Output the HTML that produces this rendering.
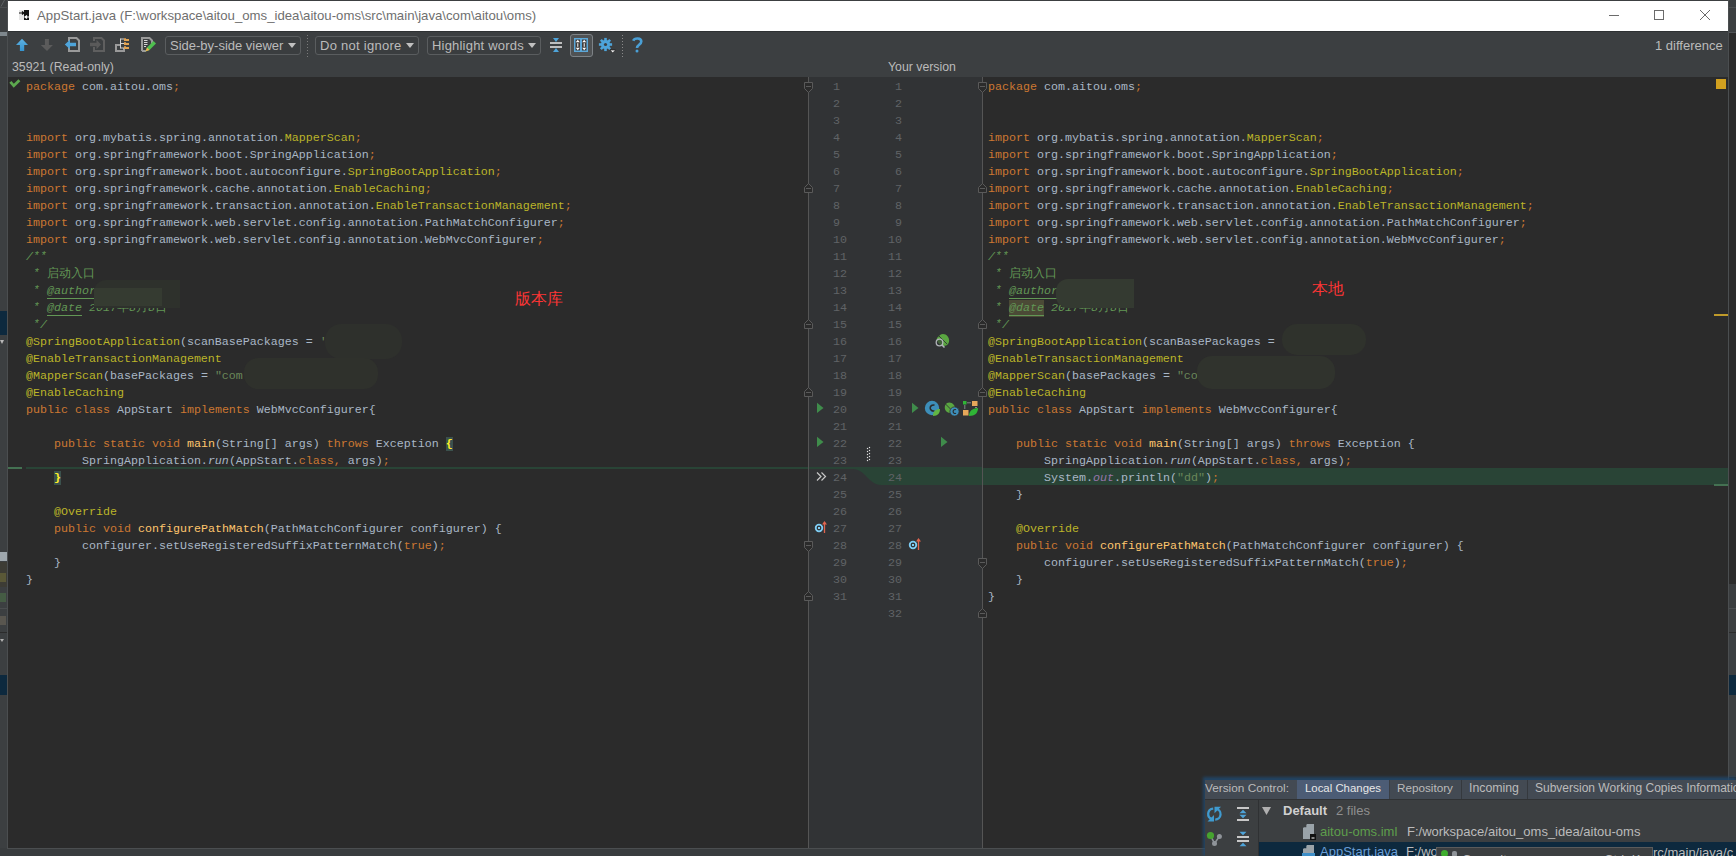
<!DOCTYPE html>
<html><head><meta charset="utf-8"><title>AppStart.java</title>
<style>
*{margin:0;padding:0;box-sizing:border-box}
html,body{width:1736px;height:856px;overflow:hidden;background:#3c3f41;font-family:"Liberation Sans",sans-serif;position:relative}
.x{position:absolute}
#title{left:8px;top:1px;width:1720px;height:30px;background:#fff}
.tt{left:37px;top:8px;font-size:13.2px;color:#6f6f6f;white-space:nowrap}
#tbline{left:8px;top:31px;width:1720px;height:1px;background:#2e3133}
.dd{top:36px;height:19px;border:1px solid #5a5d5f;border-radius:3px;background:#3a3d3f;color:#bbbbbb;font-size:13px;line-height:18px;padding-left:4px;white-space:nowrap}
.dd i{position:absolute;right:4px;top:6px;width:0;height:0;border-left:4.5px solid transparent;border-right:4.5px solid transparent;border-top:5px solid #c0c0c0}
.lbl{color:#bbbbbb;font-size:12.3px;white-space:nowrap}
#ed{left:8px;top:77px;width:1720px;height:771px;background:#2b2b2b}
#gut{left:809px;top:77px;width:173px;height:771px;background:#313335}
.code{position:absolute;top:79px;font-family:"Liberation Mono",monospace;font-size:11.667px;line-height:17px;color:#a9b7c6;white-space:pre}
.cl{left:26px}
.cr{left:988px}
.ln{height:17px}
.k{color:#cc7832}
.a{color:#bbb529}
.s{color:#6a8759}
.c{color:#629755;font-style:italic}
.cn{color:#629755}
.t{color:#629755;font-style:italic;text-decoration:underline;text-underline-offset:4px;text-decoration-thickness:1px}
.hl{background:#4b4a36;display:inline-block;height:17px;vertical-align:top}
.f{color:#ffc66d}
.i{font-style:italic}
.p{color:#9876aa;font-style:italic}
.br{color:#ffef28;background:#3b514d;font-weight:bold}
.nums{top:79px;font-family:"Liberation Mono",monospace;font-size:11.667px;line-height:17px;color:#606366;text-align:right;width:60px}
.vl{top:77px;width:1px;height:771px;background:#555555}
.red{font-size:16px;color:#fc3535;line-height:20px;white-space:nowrap}
.vct{font-size:13px;color:#bbbbbb;white-space:nowrap;line-height:17px}
.ast{display:inline-block;width:7px;font-size:10.5px;vertical-align:top;line-height:15px;text-align:center;font-weight:normal}

</style></head><body>
<!-- left background strip -->
<div class="x" style="left:0;top:0;width:8px;height:856px;background:#3c3f41"></div>
<div class="x" style="left:7px;top:0;width:1px;height:856px;background:#4b4e50"></div>
<div class="x" style="left:0;top:7px;width:7px;height:1px;background:#4b4e50"></div>
<svg class="x" style="left:0;top:0" width="8" height="8" viewBox="0 0 8 8"><path d="M1 6.5L4.5 0" stroke="#5d6163" stroke-width="1"/></svg>
<div class="x" style="left:0;top:32px;width:7px;height:4px;background:#7e878d"></div>
<div class="x" style="left:0;top:311px;width:7px;height:24px;background:#0d293e"></div>
<div class="x" style="left:0;top:552px;width:7px;height:9px;background:#9ea7ad"></div>
<div class="x" style="left:0;top:562px;width:7px;height:25px;background:#3d3c35"></div>
<div class="x" style="left:0;top:675px;width:7px;height:20px;background:#0d293e"></div>
<div class="x" style="left:0;top:340px;width:4px;height:4px;background:#b8b8b8;clip-path:polygon(0 0,100% 0,50% 100%)"></div>
<div class="x" style="left:0;top:573px;width:6px;height:9px;background:#9f9a3a;opacity:.3"></div>
<div class="x" style="left:0;top:593px;width:6px;height:9px;background:#5d9e4c;opacity:.3"></div><div class="x" style="left:0;top:608px;width:7px;height:1px;background:#4a4d4f"></div>
<div class="x" style="left:0;top:616px;width:6px;height:9px;background:#a08a70;opacity:.3"></div>
<div class="x" style="left:0;top:632px;width:7px;height:1px;background:#2b2b2b"></div>
<div class="x" style="left:0;top:639px;width:4px;height:3px;background:#b0b0b0;clip-path:polygon(0 0,100% 0,50% 100%)"></div>
<div class="x" style="left:0;top:848px;width:1205px;height:8px;background:#393c3e"></div>
<div class="x" style="left:7px;top:848px;width:1198px;height:1px;background:#4b4e50"></div>
<!-- right strip -->
<div class="x" style="left:1728px;top:0;width:8px;height:856px;background:#2b2b2b"></div>
<div class="x" style="left:1728px;top:0;width:8px;height:32px;background:#3c3f41"></div>
<div class="x" style="left:1728px;top:7px;width:8px;height:1px;background:#4b4e50"></div>
<div class="x" style="left:1728px;top:32px;width:8px;height:1px;background:#505356"></div>
<div class="x" style="left:1728px;top:584px;width:8px;height:24px;background:#3a3d3f"></div>
<div class="x" style="left:1728px;top:608px;width:8px;height:1px;background:#4b4e50"></div>
<div class="x" style="left:1728px;top:609px;width:8px;height:23px;background:#3c3f41"></div>
<div class="x" style="left:1728px;top:633px;width:8px;height:42px;background:#3b3f42"></div>
<div class="x" style="left:1728px;top:675px;width:8px;height:20px;background:#0d293e"></div>
<div class="x" style="left:1728px;top:695px;width:8px;height:82px;background:#3c3f41"></div>
<div class="x" style="left:1728px;top:0;width:1px;height:856px;background:#4b4e50"></div>
<!-- title -->
<div class="x" id="title"></div>
<svg class="x" style="left:19px;top:10px" width="11" height="11" viewBox="0 0 11 11"><rect x="0" y="0" width="5" height="10" fill="#e6e6e6"/><rect x="5" y="0" width="5" height="10" fill="#111"/><path d="M0 3h5M3 1.5l2 1.5l-2 1.5" stroke="#111" stroke-width="1.2" fill="none"/><path d="M10 7h-3M8 5.5l-2 1.5l2 1.5" stroke="#fff" stroke-width="1.2" fill="none"/></svg>
<div class="x tt">AppStart.java (F:\workspace\aitou_oms_idea\aitou-oms\src\main\java\com\aitou\oms)</div>
<div class="x" style="left:1609px;top:15px;width:10px;height:1px;background:#6b6b6b"></div>
<div class="x" style="left:1654px;top:10px;width:10px;height:10px;border:1px solid #6b6b6b"></div>
<svg class="x" style="left:1699px;top:9px" width="12" height="12" viewBox="0 0 12 12"><path d="M1 1L11 11M11 1L1 11" stroke="#6b6b6b" stroke-width="1"/></svg>
<div class="x" id="tbline"></div>
<!-- toolbar icons -->
<svg class="x" style="left:14px;top:36px" width="150" height="18" viewBox="14 36 150 18">
 <defs><linearGradient id="bl" x1="0" y1="0" x2="0" y2="1"><stop offset="0" stop-color="#5eb1e2"/><stop offset="1" stop-color="#3594d0"/></linearGradient></defs>
 <path d="M22 38.8L28 45H24.2V51H19.9V45H16Z" fill="url(#bl)"/>
 <path d="M44.9 39H48.9V45H52.9L47 51L40.8 45H44.9Z" fill="#5b5b5b"/>
 <path d="M69 41V38H76.5L79 40.5V51H69V47" fill="none" stroke="#9a9a9a" stroke-width="2"/>
 <path d="M64.8 44.5L70 39.8V42.8H76V46.2H70V49.3Z" fill="#4ea4da"/>
 <path d="M94 41V38H101.5L104 40.5V51H94V47" fill="none" stroke="#5f5f5f" stroke-width="2"/>
 <path d="M90 42.8H96.5V39.8L101 44.5L96.5 49.3V46.2H90Z" fill="#5a5a5a"/>
 <path d="M121 45H116V51H124V48" fill="none" stroke="#9a9a9a" stroke-width="2"/>
 <path d="M120.5 39H124M120.5 38.5V48.5M120.5 43.5H124M120.5 48H124" fill="none" stroke="#d2d2d2" stroke-width="1"/>
 <path d="M124 38.3H126V38.9H129V41H124ZM124 42.3H126V42.9H129V45H124ZM124 46.3H126V46.9H129V49H124Z" fill="#e2a352"/>
 <path d="M142 51V38H149.5L152 40.5V44M146 51H142" fill="none" stroke="#9a9a9a" stroke-width="2"/>
 <path d="M144 40.5H147.5M144 42.5H147.5M144 44.5H147.5M144 46.5H146" stroke="#d6d6d6" stroke-width="1"/>
 <path d="M145.5 51.5L147 47.5L153.5 41L156 43.5L149.5 50Z" fill="#4fbf4f"/>
 <path d="M145.5 51.5L147 47.5L149.5 50Z" fill="#f0b050"/>
</svg>
<div class="x dd" style="left:165px;width:136px">Side-by-side viewer<i></i></div>
<div class="x" style="left:307px;top:35px;width:1px;height:22px;background:repeating-linear-gradient(#7a7a7a 0 1px,transparent 1px 3px)"></div>
<div class="x dd" style="left:315px;width:104px;letter-spacing:0.27px">Do not ignore<i></i></div>
<div class="x dd" style="left:427px;width:114px;letter-spacing:0.2px">Highlight words<i></i></div>
<svg class="x" style="left:548px;top:36px" width="100" height="20" viewBox="548 36 100 20">
 <path d="M553 38H559L556 42Z" fill="#4ea4da"/>
 <rect x="550" y="42" width="12" height="2" fill="#bdbdbd"/>
 <rect x="550" y="46" width="12" height="2" fill="#bdbdbd"/>
 <path d="M553 52H559L556 48Z" fill="#4ea4da"/>
 <rect x="574" y="38" width="14" height="14" fill="#4a9fd5"/>
 <rect x="575.5" y="39.5" width="4.5" height="11" fill="#2a2422"/>
 <rect x="582" y="39.5" width="4.5" height="11" fill="#2a2422"/>
 <path d="M575.8 42.3L577.8 39.8L579.8 42.3ZM575.8 47.7L577.8 50.2L579.8 47.7ZM582.2 42.3L584.2 39.8L586.2 42.3ZM582.2 47.7L584.2 50.2L586.2 47.7Z" fill="#fff"/>
 <rect x="577.3" y="43.2" width="1" height="3.6" fill="#fff"/>
 <rect x="583.7" y="43.2" width="1" height="3.6" fill="#fff"/>
 <g transform="translate(605.5 44.5)" fill="#4ea4da"><circle r="4.6"/><rect x="-1.3" y="-6.6" width="2.6" height="13.2"/><rect x="-6.6" y="-1.3" width="13.2" height="2.6"/><rect x="-1.3" y="-6.6" width="2.6" height="13.2" transform="rotate(45)"/><rect x="-1.3" y="-6.6" width="2.6" height="13.2" transform="rotate(-45)"/><circle r="1.6" fill="#3c3f41"/></g>
 <path d="M610 50H615.5L612.7 53Z" fill="#f0f0f0" stroke="#111" stroke-width="0.6"/>
 <path d="M633.2 40.8C634.5 37.8 641.3 37.6 641.3 41.6C641.3 44.6 637 45 637 47.9" fill="none" stroke="#4a9fd5" stroke-width="2.6"/>
 <circle cx="637" cy="50.9" r="1.5" fill="#4a9fd5"/>
</svg>
<div class="x" style="left:570px;top:34px;width:23px;height:23px;border:1px solid #7d8286;border-radius:3px;background:rgba(255,255,255,0.1)"></div>
<div class="x" style="left:622px;top:35px;width:1px;height:22px;background:repeating-linear-gradient(#8a8a8a 0 1px,transparent 1px 3px)"></div>
<div class="x lbl" style="left:12px;top:60px">35921 (Read-only)</div>
<div class="x lbl" style="left:888px;top:60px">Your version</div>
<div class="x lbl" style="left:1655px;top:38px;font-size:13px">1 difference</div>

<div class="x" id="ed"></div>
<div class="x" id="gut"></div>
<!-- diff highlight -->
<div class="x" style="left:8px;top:467px;width:14px;height:2px;background:#447152"></div>
<div class="x" style="left:26px;top:467px;width:783px;height:2px;background:#294436"></div>
<svg class="x" style="left:809px;top:467px" width="173" height="18" viewBox="0 0 173 18"><path d="M0 0H173V18H72C60 18 56 2 44 2H0Z" fill="#294436"/></svg>
<div class="x" style="left:983px;top:468px;width:745px;height:17px;background:#294436"></div>
<div class="x" style="left:1714px;top:484px;width:14px;height:2px;background:#447152"></div>
<div class="x vl" style="left:808px"></div>
<div class="x vl" style="left:982px"></div>
<svg class="x" style="left:804px;top:82px" width="9" height="11" viewBox="0 0 9 11"><path d="M0.5 0.5H8.5V6.5L4.5 10.5L0.5 6.5Z" fill="#2b2b2b" stroke="#5a5a5a"/><path d="M2 4.5H7" stroke="#5a5a5a"/></svg><svg class="x" style="left:804px;top:183px" width="9" height="11" viewBox="0 0 9 11"><path d="M4.5 0.5L8.5 4.5V9.5H0.5V4.5Z" fill="#2b2b2b" stroke="#5a5a5a"/><path d="M2 5.5H7" stroke="#5a5a5a"/></svg><svg class="x" style="left:804px;top:319px" width="9" height="11" viewBox="0 0 9 11"><path d="M4.5 0.5L8.5 4.5V9.5H0.5V4.5Z" fill="#2b2b2b" stroke="#5a5a5a"/><path d="M2 5.5H7" stroke="#5a5a5a"/></svg><svg class="x" style="left:804px;top:387px" width="9" height="11" viewBox="0 0 9 11"><path d="M4.5 0.5L8.5 4.5V9.5H0.5V4.5Z" fill="#2b2b2b" stroke="#5a5a5a"/><path d="M2 5.5H7" stroke="#5a5a5a"/></svg><svg class="x" style="left:804px;top:541px" width="9" height="11" viewBox="0 0 9 11"><path d="M0.5 0.5H8.5V6.5L4.5 10.5L0.5 6.5Z" fill="#2b2b2b" stroke="#5a5a5a"/><path d="M2 4.5H7" stroke="#5a5a5a"/></svg><svg class="x" style="left:804px;top:591px" width="9" height="11" viewBox="0 0 9 11"><path d="M4.5 0.5L8.5 4.5V9.5H0.5V4.5Z" fill="#2b2b2b" stroke="#5a5a5a"/><path d="M2 5.5H7" stroke="#5a5a5a"/></svg><svg class="x" style="left:978px;top:82px" width="9" height="11" viewBox="0 0 9 11"><path d="M0.5 0.5H8.5V6.5L4.5 10.5L0.5 6.5Z" fill="#2b2b2b" stroke="#5a5a5a"/><path d="M2 4.5H7" stroke="#5a5a5a"/></svg><svg class="x" style="left:978px;top:183px" width="9" height="11" viewBox="0 0 9 11"><path d="M4.5 0.5L8.5 4.5V9.5H0.5V4.5Z" fill="#2b2b2b" stroke="#5a5a5a"/><path d="M2 5.5H7" stroke="#5a5a5a"/></svg><svg class="x" style="left:978px;top:319px" width="9" height="11" viewBox="0 0 9 11"><path d="M4.5 0.5L8.5 4.5V9.5H0.5V4.5Z" fill="#2b2b2b" stroke="#5a5a5a"/><path d="M2 5.5H7" stroke="#5a5a5a"/></svg><svg class="x" style="left:978px;top:387px" width="9" height="11" viewBox="0 0 9 11"><path d="M4.5 0.5L8.5 4.5V9.5H0.5V4.5Z" fill="#2b2b2b" stroke="#5a5a5a"/><path d="M2 5.5H7" stroke="#5a5a5a"/></svg><svg class="x" style="left:978px;top:558px" width="9" height="11" viewBox="0 0 9 11"><path d="M0.5 0.5H8.5V6.5L4.5 10.5L0.5 6.5Z" fill="#2b2b2b" stroke="#5a5a5a"/><path d="M2 4.5H7" stroke="#5a5a5a"/></svg><svg class="x" style="left:978px;top:608px" width="9" height="11" viewBox="0 0 9 11"><path d="M4.5 0.5L8.5 4.5V9.5H0.5V4.5Z" fill="#2b2b2b" stroke="#5a5a5a"/><path d="M2 5.5H7" stroke="#5a5a5a"/></svg>
<svg class="x" style="left:9px;top:79px" width="12" height="9" viewBox="9 79 12 9"><path d="M10.4 81.9L13.8 85.8L19.4 80.3" fill="none" stroke="#5ca84e" stroke-width="2.8"/></svg>
<div class="code cl"><div class="ln"><span class="k">package</span> com.aitou.oms<span class="k">;</span></div><div class="ln">&nbsp;</div><div class="ln">&nbsp;</div><div class="ln"><span class="k">import</span> org.mybatis.spring.annotation.<span class="a">MapperScan</span><span class="k">;</span></div><div class="ln"><span class="k">import</span> org.springframework.boot.SpringApplication<span class="k">;</span></div><div class="ln"><span class="k">import</span> org.springframework.boot.autoconfigure.<span class="a">SpringBootApplication</span><span class="k">;</span></div><div class="ln"><span class="k">import</span> org.springframework.cache.annotation.<span class="a">EnableCaching</span><span class="k">;</span></div><div class="ln"><span class="k">import</span> org.springframework.transaction.annotation.<span class="a">EnableTransactionManagement</span><span class="k">;</span></div><div class="ln"><span class="k">import</span> org.springframework.web.servlet.config.annotation.PathMatchConfigurer<span class="k">;</span></div><div class="ln"><span class="k">import</span> org.springframework.web.servlet.config.annotation.WebMvcConfigurer<span class="k">;</span></div><div class="ln"><span class="c">/<span class="ast">*</span><span class="ast">*</span></span></div><div class="ln"><span class="c"> <span class="ast">*</span> </span><span class="cn">启动入口</span></div><div class="ln"><span class="c"> <span class="ast">*</span> </span><span class="t">@author</span></div><div class="ln"><span class="c"> <span class="ast">*</span> </span><span class="t">@date</span><span class="c"> 2017</span><span class="cn">年</span><span class="c">8</span><span class="cn">月</span><span class="c">8</span><span class="cn">日</span></div><div class="ln"><span class="c"> <span class="ast">*</span>/</span></div><div class="ln"><span class="a">@SpringBootApplication</span>(scanBasePackages = <span class="s">'</span></div><div class="ln"><span class="a">@EnableTransactionManagement</span></div><div class="ln"><span class="a">@MapperScan</span>(basePackages = <span class="s">"com</span></div><div class="ln"><span class="a">@EnableCaching</span></div><div class="ln"><span class="k">public class</span> AppStart <span class="k">implements</span> WebMvcConfigurer{</div><div class="ln">&nbsp;</div><div class="ln">    <span class="k">public static void</span> <span class="f">main</span>(String[] args) <span class="k">throws</span> Exception <span class="br">{</span></div><div class="ln">        SpringApplication.<span class="i">run</span>(AppStart.<span class="k">class, </span>args)<span class="k">;</span></div><div class="ln">    <span class="br">}</span></div><div class="ln">&nbsp;</div><div class="ln">    <span class="a">@Override</span></div><div class="ln">    <span class="k">public void</span> <span class="f">configurePathMatch</span>(PathMatchConfigurer configurer) {</div><div class="ln">        configurer.setUseRegisteredSuffixPatternMatch(<span class="k">true</span>)<span class="k">;</span></div><div class="ln">    }</div><div class="ln">}</div></div>
<div class="code cr"><div class="ln"><span class="k">package</span> com.aitou.oms<span class="k">;</span></div><div class="ln">&nbsp;</div><div class="ln">&nbsp;</div><div class="ln"><span class="k">import</span> org.mybatis.spring.annotation.<span class="a">MapperScan</span><span class="k">;</span></div><div class="ln"><span class="k">import</span> org.springframework.boot.SpringApplication<span class="k">;</span></div><div class="ln"><span class="k">import</span> org.springframework.boot.autoconfigure.<span class="a">SpringBootApplication</span><span class="k">;</span></div><div class="ln"><span class="k">import</span> org.springframework.cache.annotation.<span class="a">EnableCaching</span><span class="k">;</span></div><div class="ln"><span class="k">import</span> org.springframework.transaction.annotation.<span class="a">EnableTransactionManagement</span><span class="k">;</span></div><div class="ln"><span class="k">import</span> org.springframework.web.servlet.config.annotation.PathMatchConfigurer<span class="k">;</span></div><div class="ln"><span class="k">import</span> org.springframework.web.servlet.config.annotation.WebMvcConfigurer<span class="k">;</span></div><div class="ln"><span class="c">/<span class="ast">*</span><span class="ast">*</span></span></div><div class="ln"><span class="c"> <span class="ast">*</span> </span><span class="cn">启动入口</span></div><div class="ln"><span class="c"> <span class="ast">*</span> </span><span class="t">@author</span></div><div class="ln"><span class="c"> <span class="ast">*</span> </span><span class="t hl">@date</span><span class="c"> 2017</span><span class="cn">年</span><span class="c">8</span><span class="cn">月</span><span class="c">8</span><span class="cn">日</span></div><div class="ln"><span class="c"> <span class="ast">*</span>/</span></div><div class="ln"><span class="a">@SpringBootApplication</span>(scanBasePackages = </div><div class="ln"><span class="a">@EnableTransactionManagement</span></div><div class="ln"><span class="a">@MapperScan</span>(basePackages = <span class="s">"co</span></div><div class="ln"><span class="a">@EnableCaching</span></div><div class="ln"><span class="k">public class</span> AppStart <span class="k">implements</span> WebMvcConfigurer{</div><div class="ln">&nbsp;</div><div class="ln">    <span class="k">public static void</span> <span class="f">main</span>(String[] args) <span class="k">throws</span> Exception {</div><div class="ln">        SpringApplication.<span class="i">run</span>(AppStart.<span class="k">class, </span>args)<span class="k">;</span></div><div class="ln">        System.<span class="p">out</span>.println(<span class="s">"dd"</span>)<span class="k">;</span></div><div class="ln">    }</div><div class="ln">&nbsp;</div><div class="ln">    <span class="a">@Override</span></div><div class="ln">    <span class="k">public void</span> <span class="f">configurePathMatch</span>(PathMatchConfigurer configurer) {</div><div class="ln">        configurer.setUseRegisteredSuffixPatternMatch(<span class="k">true</span>)<span class="k">;</span></div><div class="ln">    }</div><div class="ln">}</div></div>
<div class="x nums" style="left:833px;text-align:left"><div>1</div><div>2</div><div>3</div><div>4</div><div>5</div><div>6</div><div>7</div><div>8</div><div>9</div><div>10</div><div>11</div><div>12</div><div>13</div><div>14</div><div>15</div><div>16</div><div>17</div><div>18</div><div>19</div><div>20</div><div>21</div><div>22</div><div>23</div><div>24</div><div>25</div><div>26</div><div>27</div><div>28</div><div>29</div><div>30</div><div>31</div></div>
<div class="x nums" style="left:842px"><div>1</div><div>2</div><div>3</div><div>4</div><div>5</div><div>6</div><div>7</div><div>8</div><div>9</div><div>10</div><div>11</div><div>12</div><div>13</div><div>14</div><div>15</div><div>16</div><div>17</div><div>18</div><div>19</div><div>20</div><div>21</div><div>22</div><div>23</div><div>24</div><div>25</div><div>26</div><div>27</div><div>28</div><div>29</div><div>30</div><div>31</div><div>32</div></div>
<!-- gutter icons -->
<svg class="x" style="left:809px;top:330px" width="173" height="220" viewBox="809 330 173 220">
 <!-- line16 bean + magnifier -->
 <path d="M940 335C944 332 950 336 949 342C948 345 946 346 943 346C939 345 936 341 937 338Z" fill="#5aa641"/>
 <path d="M939 336L947 344" stroke="#313335" stroke-width="0.9"/>
 <circle cx="939.5" cy="342.5" r="3.3" fill="rgba(49,51,53,0.6)" stroke="#b0b4b8" stroke-width="1.3"/>
 <path d="M942 345L944.5 347.5" stroke="#b0b4b8" stroke-width="1.6"/>
 <!-- line 20 run triangles -->
 <path d="M817 402.8V413L823.5 407.9Z" fill="#3f8c4b"/>
 <path d="M912 402.8V413L918.5 407.9Z" fill="#3f8c4b"/>
 <!-- line 22 -->
 <path d="M817 436.8V447L823.5 441.9Z" fill="#3f8c4b"/>
 <path d="M941 436.8V447L947.5 441.9Z" fill="#3f8c4b"/>
 <!-- C icon -->
 <circle cx="932" cy="408" r="7.2" fill="#3d8eb9"/>
 <path d="M934.5 405.3A3 3 0 1 0 934.5 410.7" fill="none" stroke="#2b2b2b" stroke-width="1.6"/>
 <path d="M933 416C933 411 936 409 940 409C940 413 938 416 933 416Z" fill="#62b543"/>
 <!-- bean c -->
 <path d="M947 403C951 401 956 405 955 410C954 413 950 414 947 412C944 410 944 405 947 403Z" fill="#5aa641"/>
 <path d="M945.5 404L953 411.5" stroke="#313335" stroke-width="0.9"/>
 <circle cx="954.5" cy="411.5" r="4.6" fill="#3d8eb9" stroke="#313335" stroke-width="0.8"/>
 <path d="M956 409.7A2 2 0 1 0 956 413.3" fill="none" stroke="#2b2b2b" stroke-width="1.2"/>
 <!-- deps -->
 <rect x="963" y="401" width="3.5" height="3.5" fill="#2fb536"/>
 <rect x="972" y="401" width="5.5" height="5" fill="#e5a75a"/>
 <rect x="963" y="410" width="5.5" height="5.5" fill="#e5a75a"/>
 <path d="M967.5 402.8H971.5M964.8 405.5V409.5M976 407V408.5" stroke="#d8d8d8" stroke-width="1" stroke-dasharray="1 1"/>
 <path d="M969 416C969 411 972 408.5 978 408C978 413 975 416 969 416Z" fill="#2fb536"/>
 <!-- dots line 23 -->
 <g fill="#e0e0e0"><circle cx="867.5" cy="454.5" r="0.7"/><circle cx="867.5" cy="457.5" r="0.7"/><circle cx="867.5" cy="460.5" r="0.7"/><circle cx="869.5" cy="453.5" r="0.7"/><circle cx="869.5" cy="456.5" r="0.7"/><circle cx="869.5" cy="459.5" r="0.7"/><circle cx="867.5" cy="451.5" r="0.7"/><circle cx="869.5" cy="450.5" r="0.7"/><circle cx="867.5" cy="448.5" r="0.7"/><circle cx="869.5" cy="447.5" r="0.7"/></g>
 <!-- >> line 24 -->
 <path d="M817 472.5L821 476.5L817 480.5M821.5 472.5L825.5 476.5L821.5 480.5" fill="none" stroke="#c8c8c8" stroke-width="1.2"/>
 <!-- line 27 left target + arrow -->
 <circle cx="819" cy="528" r="3.3" fill="none" stroke="#7ecdf4" stroke-width="1.8"/>
 <rect x="818" y="527" width="2" height="2" fill="#7ecdf4"/>
 <path d="M824.5 533V522.5" stroke="#e0654f" stroke-width="1.3"/>
 <path d="M822 524.5L824.5 521L827 524.5Z" fill="#e0654f"/>
 <!-- line 28 right -->
 <circle cx="913" cy="545" r="3.3" fill="none" stroke="#7ecdf4" stroke-width="1.8"/>
 <rect x="912" y="544" width="2" height="2" fill="#7ecdf4"/>
 <path d="M918.5 550V539.5" stroke="#e0654f" stroke-width="1.3"/>
 <path d="M916 541.5L918.5 538L921 541.5Z" fill="#e0654f"/>
</svg>
<!-- blur patches -->
<div class="x" style="left:94px;top:280px;width:86px;height:28px;background:#2e312c;border-radius:12px 0 0 0"></div>
<div class="x" style="left:94px;top:288px;width:68px;height:18px;background:#353b31"></div>
<div class="x" style="left:325px;top:324px;width:77px;height:35px;background:#2e302c;border-radius:16px"></div>
<div class="x" style="left:244px;top:358px;width:134px;height:31px;background:#2f312c;border-radius:14px"></div>
<div class="x" style="left:1056px;top:279px;width:78px;height:29px;background:#343a31;border-radius:12px 0 0 12px"></div>
<div class="x" style="left:1282px;top:324px;width:84px;height:31px;background:#2f322c;border-radius:15px"></div>
<div class="x" style="left:1197px;top:356px;width:138px;height:33px;background:#30332d;border-radius:15px"></div>
<!-- red labels -->
<div class="x red" style="left:515px;top:289px">版本库</div>
<div class="x red" style="left:1312px;top:279px">本地</div>
<!-- scroll markers -->
<div class="x" style="left:1716px;top:79px;width:10px;height:10px;background:#d1a01f"></div>
<div class="x" style="left:1714px;top:314px;width:14px;height:2px;background:#bf9a2a"></div>
<!-- VC panel -->
<div class="x" style="left:1203px;top:777px;width:533px;height:79px;background:#1f4a72;filter:blur(1.5px);opacity:.8"></div>
<div class="x" style="left:1205px;top:780px;width:531px;height:76px;background:#3c3f41"></div>
<div class="x" style="left:1205px;top:780px;width:531px;height:19px;background:#434a53"></div>
<div class="x" style="left:1297px;top:780px;width:92px;height:19px;background:#4c5c75"></div>
<div class="x" style="left:1461px;top:780px;width:1px;height:19px;background:#35393e"></div>
<div class="x" style="left:1527px;top:780px;width:1px;height:19px;background:#35393e"></div>
<div class="x" style="left:1389px;top:780px;width:1px;height:19px;background:#3a3f46"></div>
<div class="x" style="left:1205px;top:799px;width:531px;height:1px;background:#303234"></div>
<div class="x vct" style="left:1205px;top:780px;font-size:11.8px">Version Control:</div>
<div class="x vct" style="left:1305px;top:780px;color:#e8e8e8;font-size:11.4px">Local Changes</div>
<div class="x vct" style="left:1397px;top:779px;font-size:11.7px">Repository</div>
<div class="x vct" style="left:1469px;top:780px;font-size:12.3px">Incoming</div>
<div class="x vct" style="left:1535px;top:780px;font-size:12px">Subversion Working Copies Information</div>
<div class="x" style="left:1258px;top:800px;width:1px;height:56px;background:#2f3133"></div>
<svg class="x" style="left:1205px;top:800px" width="531" height="56" viewBox="1205 800 531 56">
 <path d="M1213.2 808.6A5.4 5.4 0 0 0 1212.2 819.2" fill="none" stroke="#3f9bd0" stroke-width="2.3"/>
 <path d="M1215.2 819.6A5.4 5.4 0 0 0 1216.2 808.9" fill="none" stroke="#3f9bd0" stroke-width="2.3"/>
 <path d="M1207.5 821.5H1214V815Z" fill="#3f9bd0"/>
 <path d="M1221 806.8H1214.5V813.3Z" fill="#3f9bd0"/>
 <rect x="1237" y="807" width="12" height="2" fill="#c8c8c8"/>
 <rect x="1237" y="819" width="12" height="2" fill="#c8c8c8"/>
 <path d="M1239.5 813.2H1246.5L1243 809.8Z M1239.5 814.8H1246.5L1243 818.2Z" fill="#4ea4da"/>
 <path d="M1210.5 835.5L1214.5 843.4L1219.4 836.4" fill="none" stroke="#8f9499" stroke-width="1.6"/>
 <circle cx="1210.5" cy="835.5" r="3.6" fill="#46a32f"/>
 <circle cx="1219.4" cy="836.4" r="2.5" fill="#8f9499"/>
 <circle cx="1214.5" cy="843.4" r="2.5" fill="#8f9499"/>
 <rect x="1237" y="836" width="12" height="2" fill="#c8c8c8"/>
 <rect x="1237" y="840" width="12" height="2" fill="#c8c8c8"/>
 <path d="M1239.5 831.8H1246.5L1243 835.2Z M1239.5 846.2H1246.5L1243 842.8Z" fill="#4ea4da"/>
 <path d="M1262 807H1271L1266.5 815Z" fill="#b0b0b0"/>
 <path d="M1307 824H1314V839H1303V828Z" fill="#9aa3a9"/>
 <path d="M1303 827.3L1306.3 824V827.3Z" fill="#3c3f41"/>
 <rect x="1310" y="834" width="6" height="6" fill="#111"/>
 <rect x="1311.5" y="837.5" width="3" height="1" fill="#fff"/>
</svg>
<div class="x" style="left:1283px;top:803px;font-size:13px;font-weight:bold;color:#d0d0d0;white-space:nowrap">Default</div>
<div class="x" style="left:1336px;top:803px;font-size:13px;color:#8f8f8f;white-space:nowrap">2 files</div>
<div class="x" style="left:1320px;top:824px;font-size:13px;color:#5e9e4c;white-space:nowrap">aitou-oms.iml</div>
<div class="x" style="left:1407px;top:824px;font-size:13px;color:#bbbbbb;white-space:nowrap">F:/workspace/aitou_oms_idea/aitou-oms</div>
<div class="x" style="left:1259px;top:842px;width:477px;height:14px;background:#0d293e"></div>
<svg class="x" style="left:1300px;top:844px" width="16" height="12" viewBox="0 0 16 12"><path d="M7 1H14V12H3V5Z" fill="#9aa3a9"/><path d="M3 4.3L6.3 1V4.3Z" fill="#0d293e"/><rect x="2" y="9" width="13" height="3" fill="#3e8fc9"/></svg>
<div class="x" style="left:1320px;top:844px;font-size:13px;color:#6a9fd8;white-space:nowrap">AppStart.java</div>
<div class="x" style="left:1406px;top:844px;font-size:13px;color:#bbbbbb;white-space:nowrap">F:/wo</div>
<div class="x" style="left:1653px;top:845px;font-size:13px;color:#bbbbbb;white-space:nowrap">rc/main/java/c</div>
<div class="x" style="left:1436px;top:847px;width:217px;height:12px;background:#3c3f41;border:1px solid #5b5b5b"></div>
<div class="x" style="left:1441px;top:850px;width:7px;height:7px;border-radius:50%;background:#3fae2f"></div>
<div class="x" style="left:1452px;top:851px;width:5px;height:6px;border-radius:2px;background:#8f9499"></div>
<div class="x" style="left:1462px;top:852px;font-size:13px;color:#bbbbbb;white-space:nowrap">Commit...</div>
<div class="x" style="left:1604px;top:852px;font-size:13px;color:#bbbbbb;white-space:nowrap">Ctrl+K</div>


</body></html>
